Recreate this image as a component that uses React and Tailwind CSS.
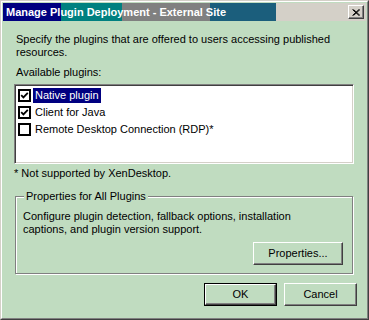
import { useState } from 'react'

const plugins = [
  { name: 'Native plugin', checked: true, selected: true },
  { name: 'Client for Java', checked: true },
  { name: 'Remote Desktop Connection (RDP)*', checked: false },
]

function CheckBox({ checked }) {
  return (
    <div className="w-[13px] h-[13px] border-2 border-black bg-white flex items-center justify-center shrink-0">
      {checked && (
        <svg width="9" height="9" viewBox="0 0 9 9">
          <polyline points="1.2,4.2 3.4,6.4 7.8,1.8" fill="none" stroke="#000" strokeWidth="1.8" />
        </svg>
      )}
    </div>
  )
}

function Button({ children, isDefault, className = '' }) {
  const inner = (
    <div className="h-full w-full flex items-center justify-center border border-t-white border-l-white border-b-[#404040] border-r-[#404040] shadow-[inset_-1px_-1px_0_#808080] text-black">
      {children}
    </div>
  )
  return isDefault ? (
    <div className={`border border-black ${className}`}>{inner}</div>
  ) : (
    <div className={className}>{inner}</div>
  )
}

export default function App() {
  const [items] = useState(plugins)
  return (
    <div className="w-[369px] h-[320px] bg-[#c0dcc0] border border-t-[#d4d0c8] border-l-[#d4d0c8] border-b-[#404040] border-r-[#404040] font-['Liberation_Sans',Arial,sans-serif] text-[11px] leading-[13px] text-black">
      <div className="h-full w-full border border-t-white border-l-white border-b-[#808080] border-r-[#808080] p-px flex flex-col">
        {/* Title bar */}
        <div className="h-[18px] shrink-0 flex items-center justify-between pl-[3px] pr-[2px] bg-[linear-gradient(to_right,#000080_58px,#008080_58px,#008080_119px,#808080_119px,#808080_207px,#1b5e7c_207px,#1b5e7c_273px,#d4d0c8_273px)]">
          <span className="text-white font-bold leading-[18px]">Manage Plugin Deployment - External Site</span>
          <div className="w-[16px] h-[14px] bg-[#d4d0c8] border border-t-white border-l-white border-b-[#404040] border-r-[#404040] shadow-[inset_-1px_-1px_0_#808080] flex items-center justify-center">
            <svg width="8" height="7" viewBox="0 0 8 7">
              <path d="M0.5 0.5 L7 6.5 M1.5 0.5 L8 6.5 M7 0.5 L0.5 6.5 M8 0.5 L1.5 6.5" stroke="#000" strokeWidth="1" fill="none" />
            </svg>
          </div>
        </div>

        {/* Body */}
        <div className="flex flex-col px-[11px]">
          <p className="mt-[12px] pl-[2px]">
            Specify the plugins that are offered to users accessing published resources.
          </p>
          <p className="mt-[7px] pl-[2px]">Available plugins:</p>

          <div className="mt-[5px] h-[80px] w-[340px] bg-white border border-t-[#808080] border-l-[#808080] border-b-white border-r-white shadow-[inset_1px_1px_0_#404040,inset_-1px_-1px_0_#d4d0c8] pt-[2px] pl-[2px]">
            {items.map((p) => (
              <div key={p.name} className="h-[17px] flex items-center pl-px">
                <CheckBox checked={p.checked} />
                <span
                  className={`ml-[2px] px-[2px] h-[15px] flex items-center ${
                    p.selected ? 'bg-[#000080] text-white' : ''
                  }`}
                >
                  {p.name}
                </span>
              </div>
            ))}
          </div>

          <p className="mt-[3px]">* Not supported by XenDesktop.</p>

          {/* Group box */}
          <div className="relative mt-[16px] ml-px w-[338px] h-[78px] border border-[#808080] shadow-[inset_1px_1px_0_#fff,1px_1px_0_#fff] flex flex-col">
            <span className="absolute -top-[7px] left-[8px] px-[2px] bg-[#c0dcc0]">Properties for All Plugins</span>
            <p className="mt-[13px] pl-[7px] w-[310px]">
              Configure plugin detection, fallback options, installation captions, and plugin version support.
            </p>
            <div className="flex justify-end pr-[9px] mt-[6px]">
              <Button className="w-[90px] h-[23px]">Properties...</Button>
            </div>
          </div>

          <div className="flex justify-end gap-[7px] mt-[9px] -mr-[2px]">
            <Button isDefault className="w-[73px] h-[23px]">OK</Button>
            <Button className="w-[73px] h-[23px]">Cancel</Button>
          </div>
        </div>
      </div>
    </div>
  )
}
